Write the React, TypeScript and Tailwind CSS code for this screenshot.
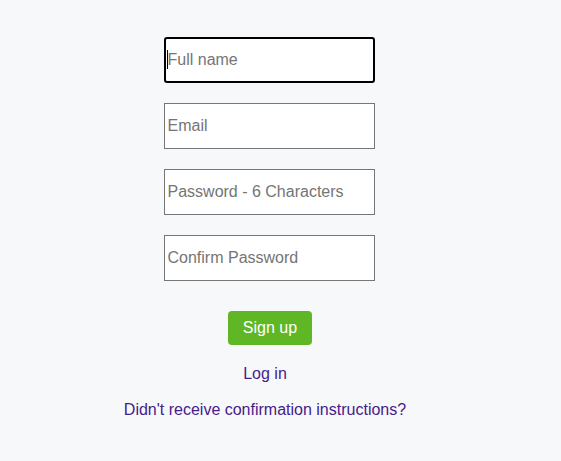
import React from "react";

const fields = ["Email", "Password - 6 Characters", "Confirm Password"];

const App = () => {
    return (
        <div className="min-h-[461px] w-full bg-[#f7f8fa] font-['Liberation_Sans',Arial,sans-serif] text-[16px]">
            <div className="flex flex-col items-center pt-[37px] pr-[23px]">
                <div className="relative">
                    <input
                        type="text"
                        placeholder="Full name"
                        className="block w-[211px] h-[46px] bg-white border-2 border-black rounded-[3px] px-[2px] text-[16px] text-black placeholder:text-[#757575] outline-none"
                    />
                    <span className="absolute left-[3px] top-[13px] w-px h-[19px] bg-black" />
                </div>
                {fields.map((f, i) => (
                    <input
                        key={i}
                        type="text"
                        placeholder={f}
                        className="block mt-[20px] w-[211px] h-[46px] bg-white border border-[#767676] px-[3px] text-[16px] text-black placeholder:text-[#757575] outline-none"
                    />
                ))}
                <button className="mt-[30px] ml-[2px] h-[34px] px-[15px] rounded-[4px] bg-[#60b726] text-white text-[16px]">
                    Sign up
                </button>
            </div>
            <div className="flex flex-col items-center pr-[31px]">
                <a href="#" className="mt-[20px] leading-[18px] text-[#46208c]">Log in</a>
                <a href="#" className="mt-[18px] leading-[18px] text-[#46208c]">Didn't receive confirmation instructions?</a>
            </div>
        </div>
    );
};

export default App;
